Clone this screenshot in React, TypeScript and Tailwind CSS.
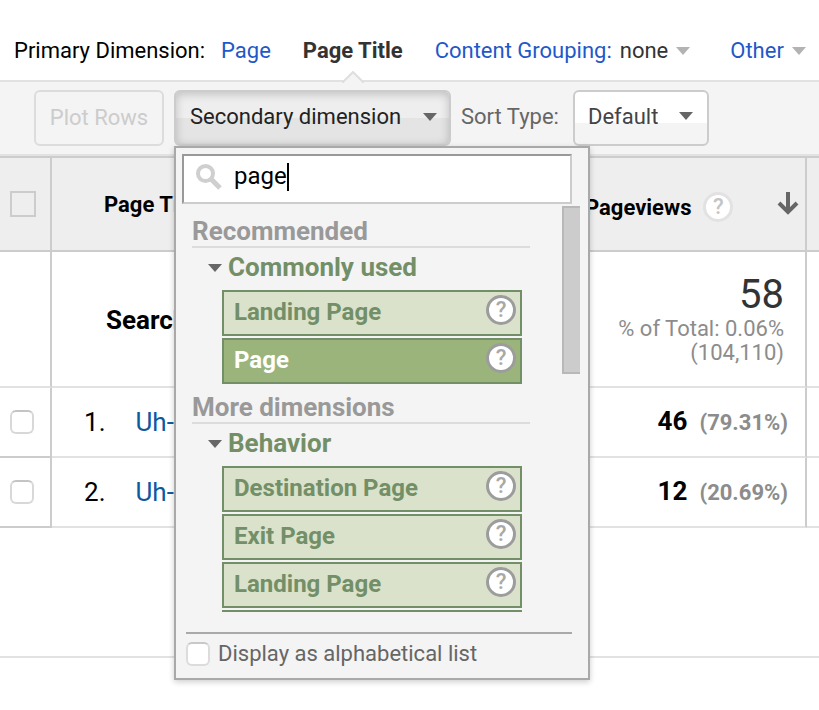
import { useState } from 'react';
import clsx from 'clsx';

interface DimensionGroup {
  heading: string;
  category: string;
  items: string[];
}

interface PageRow {
  title: string;
  views: number;
  share: string;
}

const groups: DimensionGroup[] = [
  { heading: 'Recommended', category: 'Commonly used', items: ['Landing Page', 'Page'] },
  {
    heading: 'More dimensions',
    category: 'Behavior',
    items: ['Destination Page', 'Exit Page', 'Landing Page'],
  },
];

const rows: PageRow[] = [
  { title: 'Uh-oh', views: 46, share: '(79.31%)' },
  { title: 'Uh-huh', views: 12, share: '(20.69%)' },
];

function Caret({ className }: { className?: string }) {
  return (
    <svg viewBox="0 0 14 8" className={clsx('w-3.5 h-2 shrink-0', className)} fill="currentColor" aria-hidden="true">
      <path d="M0 0h14L7 8z" />
    </svg>
  );
}

function HelpButton({ faint = false }: { faint?: boolean }) {
  return (
    <button
      type="button"
      aria-label="Help"
      className={clsx(
        'w-[30px] h-[30px] shrink-0 rounded-full border-[3px] bg-white flex items-center justify-center text-[22px] leading-6 font-medium',
        faint ? 'border-[#e2e2e2] text-[#c4c4c4]' : 'border-[#9c9c9c] text-[#a8a8a8]'
      )}
    >
      ?
    </button>
  );
}

function DimensionPicker() {
  const [query, setQuery] = useState('page');

  return (
    <div className="absolute left-0 top-full z-10 w-[416px] border-2 border-[#a9a9a9] bg-[#f4f4f4] shadow-[0_2px_6px_rgba(0,0,0,0.2)]">
      <div className="ml-1.5 mt-1.5 mr-4 h-[50px] pb-1 flex items-center bg-white border-2 border-[#ccc] border-t-[#999] border-l-[#999]">
        <svg viewBox="0 0 26 26" className="w-[26px] h-[26px] ml-3 shrink-0" fill="none" stroke="#cfcfcf" aria-hidden="true">
          <circle cx="9.5" cy="9.5" r="7.5" strokeWidth="4" />
          <path d="M15.5 15.5l8.5 8.5" strokeWidth="5" />
        </svg>
        <label className="ml-3 flex items-center text-black">
          <input
            type="text"
            aria-label="Search dimensions"
            value={query}
            onChange={(e) => setQuery(e.target.value)}
            className="field-sizing-content h-9 pb-0.5 text-2xl outline-none"
          />
          {/* Caret bar */}
          <span className="w-0.5 h-7 bg-black" />
        </label>
      </div>

      <div className="mt-0.5 mr-2 h-[406px] flex overflow-hidden">
        <div className="flex-1 pl-4 pr-8 pt-2">
          {groups.map((group) => (
            <section key={group.heading} className="mb-1.5">
              <h3 className="h-[34px] border-b-2 border-[#dcdcdc] text-[26px] leading-[34px] font-bold text-[#999]">
                {group.heading}
              </h3>
              <h4 className="h-[42px] pl-4 flex items-start text-[26px] leading-[38px] font-bold text-[#738f67]">
                <Caret className="mt-4 mr-1.5 text-[#666]" />
                {group.category}
              </h4>
              <ul className="pl-[30px] pr-2 space-y-0.5">
                {group.items.map((item, idx) => (
                  <li
                    key={idx}
                    className={clsx(
                      'h-[46px] pl-2.5 pr-1 pt-[3px] flex items-start border-2 border-[#738f67]',
                      item === 'Page' ? 'bg-[#9bb47b] text-white' : 'bg-[#dae2cb] text-[#738f67]'
                    )}
                  >
                    <button type="button" className="flex-1 text-left text-2xl leading-[34px] font-bold">
                      {item}
                    </button>
                    <HelpButton />
                  </li>
                ))}
                {/* Top edge of the next entry, just under the fold */}
                {group.category === 'Behavior' && <li className="border-t-2 border-[#738f67]" aria-hidden="true" />}
              </ul>
            </section>
          ))}
        </div>
        <div className="w-[18px] h-[168px] bg-[#ccc] border-l-2 border-y-2 border-[#b8b8b8]" />
      </div>

      <div className="mt-5 ml-2.5 mr-4 h-[46px] pt-2 border-t-2 border-[#a9a9a9]">
        <label className="flex items-center gap-2 text-[22px] leading-6 text-[#666]">
          <input
            type="checkbox"
            className="w-6 h-6 appearance-none rounded-md border-2 border-[#dcdcdc] border-t-[#c8c8c8] bg-white"
          />
          Display as alphabetical list
        </label>
      </div>
    </div>
  );
}

export default function App() {
  return (
    <div className="min-h-screen overflow-x-hidden bg-white font-['Roboto',sans-serif] text-[22px] leading-7 text-[#333]">
      {/* Primary dimension tabs */}
      <nav className="h-20 pl-3.5 pt-[37px] flex items-start whitespace-nowrap">
        <span className="text-black">Primary Dimension:</span>
        <a href="#page" className="ml-4 text-[#1f58c9]">Page</a>
        <a href="#title" className="relative z-10 ml-8 flex flex-col items-center font-bold">
          Page Title
          <svg viewBox="0 0 22 12" className="w-[22px] h-3 mt-1.5" aria-hidden="true">
            <path d="M0 12L11 1l11 11" fill="#f4f4f4" stroke="#dedede" strokeWidth="2" />
          </svg>
        </a>
        <a href="#grouping" className="ml-8 flex items-center">
          <span className="text-[#1f58c9]">Content Grouping:</span>
          <span className="ml-2">none</span>
          <Caret className="ml-2 text-[#b3b3b3]" />
        </a>
        <a href="#other" className="ml-10 flex items-center text-[#1f58c9]">
          Other
          <Caret className="ml-2 text-[#b3b3b3]" />
        </a>
      </nav>

      {/* Toolbar */}
      <div className="h-[76px] pl-[34px] pt-2 flex items-start bg-[#f4f4f4] border-y-2 border-[#e2e2e2] whitespace-nowrap">
        <button type="button" disabled className="h-14 w-[130px] rounded-md border-2 border-[#dcdcdc] text-[#ccc]">
          Plot Rows
        </button>
        <div className="relative ml-2.5">
          <button
            type="button"
            className="h-14 w-[277px] pl-3.5 pr-3 pb-0.5 flex items-center justify-between rounded-md border-2 border-[#ccc] bg-linear-to-b from-[#eee] from-50% to-[#e4e4e4] to-50% text-[#222] shadow-[inset_0_2px_10px_rgba(0,0,0,0.2)]"
          >
            Secondary dimension
            <Caret className="text-[#666]" />
          </button>
          <DimensionPicker />
        </div>
        <label htmlFor="sort-type" className="ml-2.5 mt-[13px] text-[#666]">Sort Type:</label>
        <div className="relative ml-3.5">
          <select
            id="sort-type"
            className="h-14 w-[136px] pl-[13px] pb-0.5 appearance-none rounded-md border-2 border-[#ccc] bg-linear-to-b from-white from-60% to-[#f4f4f4] to-60% text-[#444]"
          >
            <option>Default</option>
          </select>
          <Caret className="absolute right-4 top-[22px] text-[#666] pointer-events-none" />
        </div>
      </div>

      {/* Report table */}
      <table className="w-full table-fixed border-separate border-spacing-0">
        <colgroup>
          <col className="w-[52px]" />
          <col />
          <col className="w-[230px]" />
          <col className="w-3" />
        </colgroup>
        <thead>
          <tr className="h-24 bg-[#eee] text-left text-black">
            <th className="border-y-2 border-r-2 border-[#ccc] pl-2.5">
              <input
                type="checkbox"
                aria-label="Select all rows"
                className="block w-[26px] h-[26px] appearance-none border-2 border-[#ccc]"
              />
            </th>
            <th className="border-y-2 border-[#ccc] pl-[52px] pt-0.5">Page Title</th>
            <th className="border-y-2 border-r-2 border-[#ccc] pl-2 pr-1.5">
              <div className="flex items-center">
                <span className="pt-2">Pageviews</span>
                <span className="ml-3 mr-auto pt-1.5 flex">
                  <HelpButton faint />
                </span>
                <svg viewBox="0 0 22 24" className="w-[22px] h-6" fill="none" stroke="#666" strokeWidth="4" aria-hidden="true">
                  <path d="M11 0v20M2 11l9 9 9-9" />
                </svg>
              </div>
            </th>
            <th className="border-y-2 border-[#ccc]" />
          </tr>
        </thead>
        <tbody>
          <tr className="h-[136px]">
            <td className="border-b-2 border-r-2 border-b-[#e2e2e2] border-r-[#ccc]" />
            <td className="border-b-2 border-[#e2e2e2] pl-[54px] pt-0.5 text-[26px] font-bold text-black">Search Traffic</td>
            <td className="border-b-2 border-r-2 border-b-[#e2e2e2] border-r-[#ccc] pr-[21px] text-right text-[#8c8c8c] leading-6">
              <div className="text-[40px] leading-[44px] text-[#333]">58</div>
              <div>% of Total: 0.06%</div>
              <div>(104,110)</div>
            </td>
            <td className="border-b-2 border-[#e2e2e2]" />
          </tr>
          {rows.map((row, idx) => (
            <tr key={row.title} className="h-[70px]">
              <td className="border-b-2 border-r-2 border-[#ccc] pl-2.5">
                <input
                  type="checkbox"
                  aria-label={`Select row ${idx + 1}`}
                  className="block w-6 h-6 appearance-none rounded-md border-2 border-[#d8d8d8] border-t-[#c4c4c4] bg-white"
                />
              </td>
              <td className="border-b-2 border-[#e2e2e2] pl-8 text-[26px] text-black">
                {idx + 1}.
                <a href="#row" className="ml-[30px] text-[#0a5aa0]">{row.title}</a>
              </td>
              <td className="border-b-2 border-r-2 border-b-[#e2e2e2] border-r-[#ccc] pr-[17px] text-right font-bold">
                <span className="text-[26px] text-black">{row.views}</span>
                <span className="ml-3 text-[#8c8c8c]">{row.share}</span>
              </td>
              <td className="border-b-2 border-[#e2e2e2]" />
            </tr>
          ))}
        </tbody>
      </table>
      <div className="h-[130px] border-b-2 border-[#e2e2e2]" />
    </div>
  );
}
